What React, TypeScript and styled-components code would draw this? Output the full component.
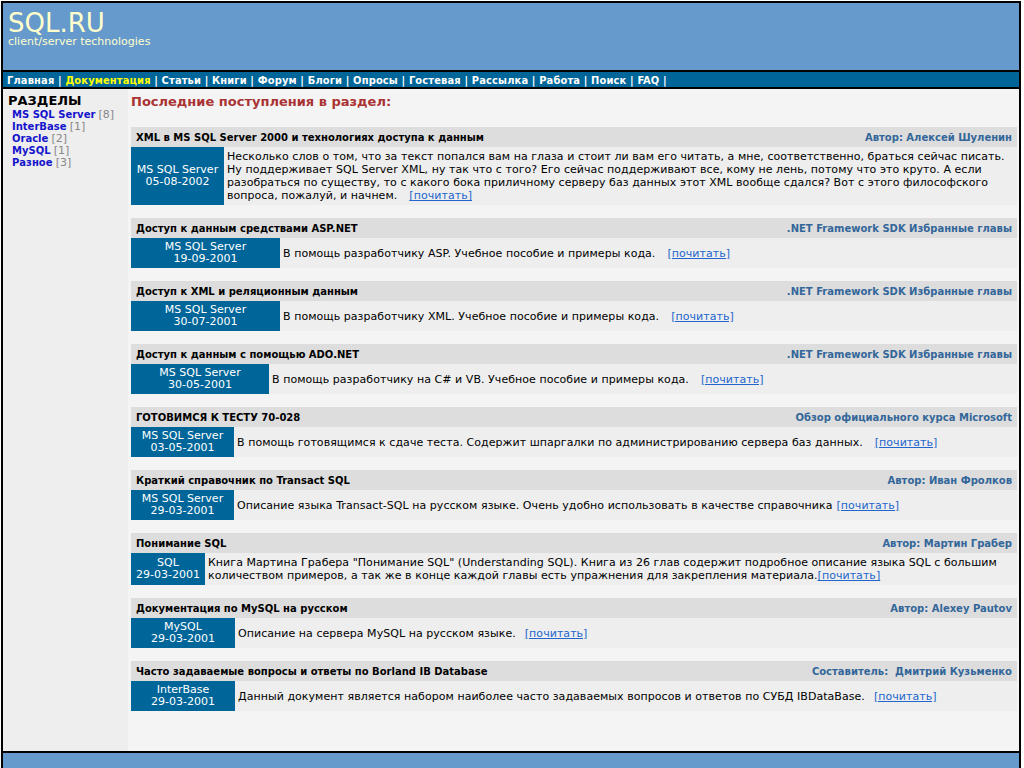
import React from "react";
import styled, { createGlobalStyle } from "styled-components";

const Global = createGlobalStyle`
  html, body { margin: 0; padding: 0; background: #fff; overflow: hidden; }
  body { font-family: "DejaVu Sans", Verdana, sans-serif; }
`;

const Page = styled.div`
  margin: 1px 3px 0 1px;
  border: 2px solid #000;
  border-bottom: none;
  background: #f4f4f4;
`;

const Header = styled.header`
  height: 67px;
  box-sizing: border-box;
  padding: 7px 5px 0;
  background: #6699cc;
  color: #ffffcc;
`;

const Logo = styled.div`
  font-size: 26px;
  line-height: 26px;
`;

const Tagline = styled.div`
  font-size: 11px;
  line-height: 12px;
`;

const Nav = styled.nav`
  height: 12px;
  padding: 3px 0 0 4px;
  background: #006699;
  border-top: 2px solid #000;
  border-bottom: 2px solid #000;
  font-family: "DejaVu Sans Condensed", "DejaVu Sans", sans-serif;
  font-weight: bold;
  font-size: 11px;
  letter-spacing: 0.15px;
  line-height: 12px;
  color: #fff;
  white-space: nowrap;
  overflow: hidden;
`;

const NavLink = styled.span<{ $active?: boolean }>`
  color: ${(p) => (p.$active ? "#ffff00" : "#ffffff")};
`;

const Content = styled.div`
  display: grid;
  grid-template-columns: 125px 1fr;
  min-height: 662px;
`;

const Sidebar = styled.aside`
  background: #eeeeee;
  padding: 5px 0 0 5px;
`;

const SideTitle = styled.div`
  font-weight: bold;
  font-size: 13px;
  line-height: 14px;
  color: #000;
  margin-bottom: 1px;
`;

const SideItem = styled.div`
  padding-left: 4px;
  font-size: 10px;
  line-height: 12px;
`;

const SideLink = styled.span`
  font-weight: bold;
  color: #1414cc;
`;

const Count = styled.span`
  color: #888;
  font-size: 11px;
`;

const Main = styled.main`
  padding: 5px 2px 10px 3px;
`;

const Heading = styled.h1`
  margin: 0 0 17px;
  font-size: 13px;
  line-height: 16px;
  font-weight: bold;
  color: #aa3333;
`;

const Article = styled.section`
  margin-bottom: 13px;
`;

const TitleRow = styled.div`
  display: flex;
  justify-content: space-between;
  align-items: center;
  height: 20px;
  padding: 0 5px;
  background: #dddddd;
  font-size: 10px;
  font-weight: bold;
`;

const Title = styled.span`
  color: #000;
`;

const Author = styled.span`
  color: #336699;
  white-space: pre;
`;

const Body = styled.div`
  display: flex;
  background: #eeeeee;
`;

const Cat = styled.div<{ $w: number }>`
  flex: 0 0 ${(p) => p.$w}px;
  display: flex;
  flex-direction: column;
  justify-content: center;
  align-items: center;
  padding: 3px 0;
  background: #006699;
  color: #fff;
  font-size: 11px;
  line-height: 12px;
  white-space: nowrap;
`;

const Text = styled.div`
  flex: 1;
  display: flex;
  align-items: center;
  padding: 3px;
  font-size: 11px;
  line-height: 13px;
  letter-spacing: 0.05px;
  color: #000;
`;

const Read = styled.a<{ $gap: number }>`
  margin-left: ${(p) => p.$gap}px;
  color: #2266cc;
  text-decoration: underline;
`;

const Footer = styled.footer`
  height: 20px;
  background: #6699cc;
  border-top: 2px solid #000;
`;

const nav = [
  "Главная",
  "Документация",
  "Статьи",
  "Книги",
  "Форум",
  "Блоги",
  "Опросы",
  "Гостевая",
  "Рассылка",
  "Работа",
  "Поиск",
  "FAQ",
];

const sections: [string, number][] = [
  ["MS SQL Server", 8],
  ["InterBase", 1],
  ["Oracle", 2],
  ["MySQL", 1],
  ["Разное", 3],
];

type Item = {
  title: string;
  author: string;
  cat: string;
  date: string;
  w: number;
  lines: string[];
  gap: number;
};

const items: Item[] = [
  {
    title: "XML в MS SQL Server 2000 и технологиях доступа к данным",
    author: "Автор: Алексей Шуленин",
    cat: "MS SQL Server",
    date: "05-08-2002",
    w: 93,
    lines: [
      "Несколько слов о том, что за текст попался вам на глаза и стоит ли вам его читать, а мне, соответственно, браться сейчас писать.",
      "Ну поддерживает SQL Server XML, ну так что с того? Его сейчас поддерживают все, кому не лень, потому что это круто. А если",
      "разобраться по существу, то с какого бока приличному серверу баз данных этот XML вообще сдался? Вот с этого философского",
      "вопроса, пожалуй, и начнем.",
    ],
    gap: 12,
  },
  {
    title: "Доступ к данным средствами ASP.NET",
    author: ".NET Framework SDK Избранные главы",
    cat: "MS SQL Server",
    date: "19-09-2001",
    w: 149,
    lines: ["В помощь разработчику ASP. Учебное пособие и примеры кода."],
    gap: 12,
  },
  {
    title: "Доступ к XML и реляционным данным",
    author: ".NET Framework SDK Избранные главы",
    cat: "MS SQL Server",
    date: "30-07-2001",
    w: 149,
    lines: ["В помощь разработчику XML. Учебное пособие и примеры кода."],
    gap: 12,
  },
  {
    title: "Доступ к данным с помощью ADO.NET",
    author: ".NET Framework SDK Избранные главы",
    cat: "MS SQL Server",
    date: "30-05-2001",
    w: 138,
    lines: ["В помощь разработчику на C# и VB. Учебное пособие и примеры кода."],
    gap: 12,
  },
  {
    title: "ГОТОВИМСЯ К ТЕСТУ 70-028",
    author: "Обзор официального курса Microsoft",
    cat: "MS SQL Server",
    date: "03-05-2001",
    w: 103,
    lines: [
      "В помощь готовящимся к сдаче теста. Содержит шпаргалки по администрированию сервера баз данных.",
    ],
    gap: 12,
  },
  {
    title: "Краткий справочник по Transact SQL",
    author: "Автор: Иван Фролков",
    cat: "MS SQL Server",
    date: "29-03-2001",
    w: 103,
    lines: [
      "Описание языка Transact-SQL на русском языке. Очень удобно использовать в качестве справочника",
    ],
    gap: 4,
  },
  {
    title: "Понимание SQL",
    author: "Автор: Мартин Грабер",
    cat: "SQL",
    date: "29-03-2001",
    w: 74,
    lines: [
      "Книга Мартина Грабера \"Понимание SQL\" (Understanding SQL). Книга из 26 глав содержит подробное описание языка SQL с большим",
      "количеством примеров, а так же в конце каждой главы есть упражнения для закрепления материала.",
    ],
    gap: 0,
  },
  {
    title: "Документация по MySQL на русском",
    author: "Автор: Alexey Pautov",
    cat: "MySQL",
    date: "29-03-2001",
    w: 104,
    lines: ["Описание на сервера MySQL на русском языке."],
    gap: 9,
  },
  {
    title: "Часто задаваемые вопросы и ответы по Borland IB Database",
    author: "Составитель:  Дмитрий Кузьменко",
    cat: "InterBase",
    date: "29-03-2001",
    w: 104,
    lines: [
      "Данный документ является набором наиболее часто задаваемых вопросов и ответов по СУБД IBDataBase.",
    ],
    gap: 9,
  },
];

export default function App() {
  return (
    <>
      <Global />
      <Page>
        <Header>
          <Logo>SQL.RU</Logo>
          <Tagline>client/server technologies</Tagline>
        </Header>
        <Nav>
          {nav.map((n, i) => (
            <React.Fragment key={n}>
              {i > 0 ? " " : ""}
              <NavLink $active={n === "Документация"}>{n}</NavLink> |
            </React.Fragment>
          ))}
        </Nav>
        <Content>
          <Sidebar>
            <SideTitle>РАЗДЕЛЫ</SideTitle>
            {sections.map(([name, c]) => (
              <SideItem key={name}>
                <SideLink>{name}</SideLink> <Count>[{c}]</Count>
              </SideItem>
            ))}
          </Sidebar>
          <Main>
            <Heading>Последние поступления в раздел:</Heading>
            {items.map((it) => (
              <Article key={it.title}>
                <TitleRow>
                  <Title>{it.title}</Title>
                  <Author>{it.author}</Author>
                </TitleRow>
                <Body>
                  <Cat $w={it.w}>
                    <span>{it.cat}</span>
                    <span>{it.date}</span>
                  </Cat>
                  <Text>
                    <div>
                      {it.lines.map((l, i) => (
                        <React.Fragment key={i}>
                          {i > 0 && <br />}
                          {l}
                        </React.Fragment>
                      ))}
                      <Read href="#" $gap={it.gap}>
                        [почитать]
                      </Read>
                    </div>
                  </Text>
                </Body>
              </Article>
            ))}
          </Main>
        </Content>
        <Footer />
      </Page>
    </>
  );
}
